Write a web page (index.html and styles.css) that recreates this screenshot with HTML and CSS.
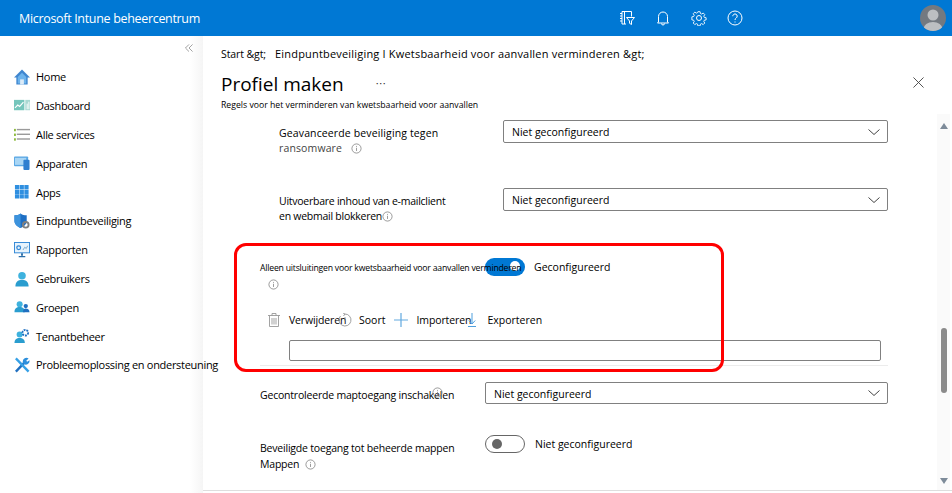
FILE: index.html
```html
<!DOCTYPE html>
<html lang="nl">
<head>
<meta charset="utf-8">
<title>Microsoft Intune beheercentrum</title>
<link rel="stylesheet" href="styles.css">
</head>
<body>
<header class="topbar">
  <div class="brand">Microsoft Intune beheercentrum</div>
  <div class="top-icons">
    <svg class="top-icon" viewBox="0 0 16 16"><path d="M3 1.500h9.500v5M3 1.500v12.500h4M1 3.500h2M1 6h2M1 8.500h2M1 11h2M5.500 1.500v12.500M7.500 7.500h8l-3 3.500v3.500l-2-1.200v-2.300z"/></svg>
    <svg class="top-icon" viewBox="0 0 16 16"><path d="M3.500 12V6.500a4.500 4.500 0 0 1 9 0V12l1 1h-11zM6.500 13.500a1.500 1.500 0 0 0 3 0"/></svg>
    <svg class="top-icon" viewBox="0 0 16 16"><circle cx="8" cy="8" r="2.500"/><path d="M6.800 1h2.400l.4 2 1.300.6 1.800-1.100 1.700 1.700-1.100 1.800.6 1.300 2 .4v2.400l-2 .4-.6 1.300 1.100 1.800-1.700 1.700-1.800-1.100-1.300.6-.4 2H6.800l-.4-2-1.300-.6-1.800 1.100-1.700-1.700 1.100-1.800-.6-1.300-2-.4V6.700l2-.4.6-1.300-1.100-1.800 1.700-1.700 1.800 1.100 1.300-.6z" transform="translate(.8 .8) scale(.9)"/></svg>
    <svg class="top-icon" viewBox="0 0 16 16"><circle cx="8" cy="8" r="7"/><path d="M5.800 6.200a2.200 2.200 0 1 1 3.400 1.800c-.8.500-1.200 1-1.200 2M8 11.500v1"/></svg>
  </div>
  <svg class="avatar" viewBox="0 0 26 26"><defs><clipPath id="av"><circle cx="13" cy="13" r="13"/></clipPath></defs><circle cx="13" cy="13" r="13" fill="#737980"/><g clip-path="url(#av)" fill="#bcbfc2"><circle cx="13" cy="10" r="5.500"/><ellipse cx="13" cy="24" rx="9.500" ry="7"/></g></svg>
</header>

<div class="shell">
  <nav class="sidebar">
    <div class="collapse">
      <svg class="collapse-icon" viewBox="0 0 9 9"><path d="M4.500 .5 .5 4.500l4 4M8.500 .5l-4 4 4 4"/></svg>
    </div>
    <a class="nav-item"><svg class="nav-icon" viewBox="0 0 17 17"><path d="M8.500 .5 0 9h2.500v7.500h12V9H17z" fill="#3f86cf"/><path d="M4 8.500 8.500 4 13 8.500v7H4z" fill="#6db3ec"/><rect x="6.500" y="11" width="4" height="5.500" fill="#dcebf8"/></svg><span>Home</span></a>
    <a class="nav-item"><svg class="nav-icon" viewBox="0 0 17 17"><rect y="2" width="11" height="11" fill="#76c6bc"/><rect x="12" y="2" width="5" height="11" fill="#a8d8d2"/><path d="M1 10.500 4 7.500l2 1.500 4-4.500" fill="none" stroke="#fff" stroke-width="1.200"/><path d="M14 12V6M15.800 12V4" stroke="#fff"/></svg><span>Dashboard</span></a>
    <a class="nav-item"><svg class="nav-icon" viewBox="0 0 17 17"><g fill="#8dbb3e"><rect y="2" width="2" height="2.500"/><rect y="7" width="2" height="2.500"/><rect y="12" width="2" height="2.500"/></g><g fill="#9a9a9a"><rect x="3" y="2" width="14" height="1.500"/><rect x="3" y="7" width="14" height="1.500"/><rect x="3" y="12" width="14" height="1.500"/></g></svg><span>Alle services</span></a>
    <a class="nav-item"><svg class="nav-icon" viewBox="0 0 17 17"><rect y="1.500" width="15" height="10.500" rx="1" fill="#5aa7e4"/><rect x="1" y="3" width="12" height="7.500" fill="#a9d6f5"/><rect x="10" y="5" width="6.500" height="11" rx="1" fill="#2f7fd0"/></svg><span>Apparaten</span></a>
    <a class="nav-item"><svg class="nav-icon" viewBox="0 0 17 17"><path fill="#2f8fe0" d="M1 1h4.500v4.500H1zM6 1h4.500v4.500H6zM11 1h4.500v4.500H11zM1 6h4.500v4.500H1zM6 6h4.500v4.500H6zM11 6h4.500v4.500H11zM1 11h4.500v4.500H1zM6 11h4.500v4.500H6zM11 11h4.500v4.500H11z"/></svg><span>Apps</span></a>
    <a class="nav-item"><svg class="nav-icon" viewBox="0 0 17 17"><path d="M7 .5C5 2 3 2.500.5 2.500v6C.500 12 3.500 14.500 7 16c3.500-1.500 6.500-4 6.500-7.500v-6C11 2.500 9 2 7 .5z" fill="#1e6fc4"/><path d="M7 .5v15.500C3.500 14.500.5 12 .5 8.500v-6C3 2.500 5 2 7 .5z" fill="#3c93dd"/><circle cx="12.500" cy="12.500" r="3" fill="none" stroke="#7f7f7f" stroke-width="2"/></svg><span>Eindpuntbeveiliging</span></a>
    <a class="nav-item"><svg class="nav-icon" viewBox="0 0 17 17"><rect x=".5" y=".5" width="16" height="11" fill="#e7f3fc" stroke="#2f86d6"/><circle cx="5" cy="6" r="2" fill="none" stroke="#2f86d6" stroke-width="1.300"/><path d="M9.500 8.500l2-3 1.500 1.500 1.500-3" fill="none" stroke="#7aa6c8"/><path d="M7.500 12h2v2.500h-2zM5 15h7v1.200H5z" fill="#2a6da8"/></svg><span>Rapporten</span></a>
    <a class="nav-item"><svg class="nav-icon" viewBox="0 0 17 17"><circle cx="8.500" cy="5" r="4" fill="#3eb2de"/><path d="M1.500 16.500c0-5 2.500-7 7-7s7 2 7 7z" fill="#2a9dcf"/></svg><span>Gebruikers</span></a>
    <a class="nav-item"><svg class="nav-icon" viewBox="0 0 17 17"><circle cx="6" cy="5.500" r="3.200" fill="#3eb2de"/><path d="M.5 14c0-4 2-5.500 5.500-5.500s5.500 1.500 5.500 5.500z" fill="#2a9dcf"/><circle cx="12.500" cy="7.500" r="2.300" fill="#1f6fc0"/><path d="M9.500 14c.2-3 1.200-4 3-4s4 1 4 4z" fill="#1f6fc0"/></svg><span>Groepen</span></a>
    <a class="nav-item"><svg class="nav-icon" viewBox="0 0 17 17"><circle cx="6" cy="7" r="3.200" fill="#3eb2de"/><path d="M.5 16c0-4 2-5.500 5.500-5.500s5.500 1.500 5.500 5.500z" fill="#2a9dcf"/><circle cx="12" cy="5" r="3" fill="none" stroke="#1f6fc0" stroke-width="2" stroke-dasharray="2 1"/></svg><span>Tenantbeheer</span></a>
    <a class="nav-item"><svg class="nav-icon" viewBox="0 0 17 17"><path d="M2 15.500 11 6" stroke="#1f6fc0" stroke-width="2.500" fill="none"/><path d="M9.500 6a4 4 0 0 1 6-4.500l-2.500 2.500 1 1 2.500-1.500a4 4 0 0 1-6 4z" fill="#2d8fdc"/><path d="M2 1.500l13.500 14" stroke="#35a0e6" stroke-width="2.500" fill="none"/></svg><span class="nowrap">Probleemoplossing en ondersteuning</span></a>
  </nav>

  <main class="main">
    <div class="crumbs">
      <span class="crumb-start">Start &amp;gt;</span>
      <span class="crumb-path">Eindpuntbeveiliging I Kwetsbaarheid voor aanvallen verminderen &amp;gt;</span>
    </div>
    <div class="title-row">
      <h1 class="title">Profiel maken</h1>
      <span class="more">···</span>
      <svg class="close" viewBox="0 0 12 12"><path d="M.5.500l11 11M11.500.500l-11 11"/></svg>
    </div>
    <p class="subtitle">Regels voor het verminderen van kwetsbaarheid voor aanvallen</p>

    <div class="panel">
      <div class="form">
        <div class="row row-a">
          <div class="label label-a label-wide">Geavanceerde beveiliging tegen<br><span class="muted">ransomware</span>
            <svg class="info info-gap" viewBox="0 0 12 12"><circle cx="6" cy="6" r="5"/><path d="M6 5.200v3.500M6 3.200v1"/></svg></div>
          <div class="select select-a">Niet geconfigureerd<svg class="chevron" viewBox="0 0 12 6"><path d="M.5.500 6 5.500 11.500.500"/></svg></div>
        </div>
        <div class="row row-b">
          <div class="label label-a label-tight">Uitvoerbare inhoud van e-mailclient<br>en webmail blokkeren<svg class="info" viewBox="0 0 12 12"><circle cx="6" cy="6" r="5"/><path d="M6 5.200v3.500M6 3.200v1"/></svg></div>
          <div class="select select-a">Niet geconfigureerd<svg class="chevron" viewBox="0 0 12 6"><path d="M.5.500 6 5.500 11.500.500"/></svg></div>
        </div>
        <div class="row row-c">
          <div class="label label-c label-top"><span class="tiny">Alleen uitsluitingen voor kwetsbaarheid voor aanvallen verminderen</span><br><svg class="info info-c" viewBox="0 0 12 12"><circle cx="6" cy="6" r="5"/><path d="M6 5.200v3.500M6 3.200v1"/></svg></div>
          <div class="toggle toggle-on"><i class="knob"></i></div>
          <span class="toggle-text">Geconfigureerd</span>
        </div>
        <div class="toolbar">
          <svg class="tool-icon trash" viewBox="0 0 12 14"><path d="M0 2.500h12M4 2.500V.5h4v2M1.500 2.500v11h9v-11M4 5v6.500M6 5v6.500M8 5v6.500"/></svg>
          <span class="tool-del">Verwijderen</span>
          <svg class="tool-icon sort" viewBox="0 0 14 14"><path d="M7 1a6 6 0 1 1-4.500 2M7 1 5 0M7 1 5.500 3M7 4v4"/></svg>
          <span class="tool-sort">Soort</span>
          <svg class="tool-icon plus" viewBox="0 0 14 14"><path d="M7 0v14M0 7h14"/></svg>
          <span class="tool-imp">Importeren</span>
          <svg class="tool-icon down" viewBox="0 0 8 14"><path d="M4 0v11M.8 7.500 4 11l3.200-3.500M0 13.500h8"/></svg>
          <span class="tool-exp">Exporteren</span>
        </div>
        <div class="text-input"></div>
        <div class="divider"></div>
        <div class="row row-d">
          <div class="label label-c label-d label-narrow">Gecontroleerde maptoegang inschakelen<svg class="info info-d" viewBox="0 0 12 12"><circle cx="6" cy="6" r="5"/><path d="M6 5.200v3.500M6 3.200v1"/></svg></div>
          <div class="select select-d">Niet geconfigureerd<svg class="chevron" viewBox="0 0 12 6"><path d="M.5.500 6 5.500 11.500.500"/></svg></div>
        </div>
        <div class="row row-e">
          <div class="label label-c label-e label-narrow">Beveiligde toegang tot beheerde mappen<br>Mappen<svg class="info info-gap" viewBox="0 0 12 12"><circle cx="6" cy="6" r="5"/><path d="M6 5.200v3.500M6 3.200v1"/></svg></div>
          <div class="toggle toggle-off"><i class="knob"></i></div>
          <span class="toggle-text toggle-text-off">Niet geconfigureerd</span>
        </div>
      </div>
      <div class="scrollbar">
        <i class="arrow-up"></i>
        <i class="thumb"></i>
        <i class="arrow-down"></i>
      </div>
    </div>
    <div class="bottom-line"></div>
    <div class="callout"></div>
  </main>
</div>
</body>
</html>
```
FILE: styles.css
```css
* { box-sizing: border-box; }
html, body { margin: 0; height: 100%; overflow: hidden; }
body { font-family: "Open Sans", "Noto Sans", sans-serif; font-size: 11px; color: #000; background: #fff; }
svg { display: block; flex: none; }

.topbar { height: 36px; background: #0078d4; display: flex; align-items: center; color: #fff; }
.brand { margin-left: 19px; font-size: 12.500px; letter-spacing: -.32px; }
.top-icons { margin-left: auto; display: flex; gap: 20px; margin-right: 209px; }
.top-icon { width: 16px; height: 16px; fill: none; stroke: #fff; stroke-width: 1; }
.avatar { width: 26px; height: 26px; position: absolute; left: 920px; top: 5px; }

.shell { display: flex; height: 457px; }
.sidebar { width: 203px; flex: none; background: linear-gradient(to right, #fff 190px, #f5f5f5 203px); padding-left: 14px; }
.collapse { height: 26.600px; padding: 8px 0 0 171px; }
.collapse-icon { width: 8px; height: 8px; fill: none; stroke: #8a8a8a; stroke-width: .9; }
.nav-item { display: flex; align-items: center; height: 28.800px; gap: 6px; letter-spacing: -.3px; }
.nav-icon { width: 16px; height: 16px; }
.nowrap { white-space: nowrap; }

.main { flex: 1; position: relative; min-width: 0; display: flex; flex-direction: column; }
.crumbs { display: flex; height: 36px; padding: 10px 0 0 18px; line-height: 16px; }
.crumb-start { width: 54px; font-size: 10.500px; letter-spacing: -.1px; }
.crumb-path { white-space: nowrap; font-size: 11px; letter-spacing: .19px; }
.title-row { display: flex; align-items: center; height: 24px; padding: 0 28px 0 18px; }
.title { margin: 0; font-size: 19px; font-weight: 400; line-height: 24px; }
.more { margin-left: 32px; font-size: 11px; letter-spacing: .6px; color: #333; position: relative; top: -2px; }
.close { width: 11px; height: 11px; margin: 0 0 3px auto; fill: none; stroke: #444; stroke-width: 1; }
.subtitle { margin: 0; padding: 3px 0 0 18px; font-size: 8.700px; line-height: 12px; height: 18px; white-space: nowrap; }

.panel { flex: 1; display: flex; min-height: 0; }
.form { flex: 1; min-width: 0; padding-top: 6px; }
.row { display: flex; align-items: flex-start; }
.row-a { padding-left: 76px; height: 68px; }
.row-b { padding-left: 76px; height: 70px; }
.row-c { padding-left: 57px; height: 51px; }
.row-d { padding-left: 57px; height: 53px; margin-top: 16px; }
.row-e { padding-left: 57px; }
.label { line-height: 15px; white-space: nowrap; font-size: 10.500px; }
.label-a { width: 224px; padding-top: 6px; }
.label-c { width: 225px; padding-top: 4px; position: relative; z-index: 1; }
.label-top { padding-top: 2px; }
.label-d { padding-top: 6px; }
.label-e { padding-top: 5px; line-height: 16px; }
.label-wide { letter-spacing: .13px; }
.label-tight { letter-spacing: -.25px; }
.label-narrow { letter-spacing: -.2px; }
.muted { color: #444; }
.tiny { font-size: 8.700px; letter-spacing: -.22px; }
.info { display: inline-block; width: 11px; height: 11px; vertical-align: -2px; fill: none; stroke: #777; stroke-width: .8; }
.info-gap { margin-left: 6px; }
.info-c { margin: 3px 0 0 8px; }
.info-d { position: absolute; left: 172px; top: 5px; }

.select { height: 23px; border: 1px solid #808080; border-radius: 2px; display: flex; align-items: center; justify-content: space-between; padding: 1px 7px 0 8px; font-size: 10.500px; background: #fff; }
.select-a { width: 385px; }
.select-d { width: 403px; height: 22px; }
.chevron { width: 12px; height: 6px; margin-top: -1px; fill: none; stroke: #444; stroke-width: 1; }

.toggle { width: 40px; height: 18px; border-radius: 9px; position: relative; flex: none; }
.toggle-on { background: #0078d4; }
.toggle-off { background: #fff; border: 1px solid #666; }
.knob { position: absolute; width: 10px; height: 10px; border-radius: 50%; top: 3px; }
.toggle-on .knob { right: 5px; background: #fff; }
.toggle-off .knob { left: 6px; top: 3px; background: #666; }
.toggle-text { margin-left: 9px; padding-top: 1px; line-height: 16px; font-size: 10.500px; }
.toggle-text-off { margin-left: 10px; }

.toolbar { display: flex; align-items: center; height: 22px; margin-left: 71px; font-size: 10.500px; }
.tool-icon { fill: none; }
.trash { width: 12px; height: 14px; stroke: #999; stroke-width: .9; margin-left: -6px; }
.tool-del { margin-left: 9px; width: 49px; white-space: nowrap; letter-spacing: -.15px; }
.sort { width: 14px; height: 14px; stroke: #888; stroke-width: .8; }
.tool-sort { margin-left: 7px; }
.plus { width: 14px; height: 14px; stroke: #62a9e0; stroke-width: 1.200; margin-left: 9px; }
.tool-imp { margin-left: 8px; width: 52px; white-space: nowrap; letter-spacing: -.1px; }
.down { width: 8px; height: 14px; stroke: #4f9fdd; stroke-width: 1; }
.tool-exp { margin-left: 11px; }
.text-input { width: 592px; height: 21px; margin: 9px 0 0 86px; border: 1px solid #808080; border-radius: 2px; background: #fff; }
.divider { height: 1px; margin: 4px 0 0 57px; width: 628px; background: #ececec; }

.scrollbar { width: 13px; margin-right: 2px; background: #fafafa; display: flex; flex-direction: column; align-items: center; }
.arrow-up, .arrow-down { width: 0; height: 0; border-left: 4px solid transparent; border-right: 4px solid transparent; }
.arrow-up { border-bottom: 6px solid #7d8b99; margin-top: 9px; }
.thumb { width: 6px; height: 65px; background: #8a8a8a; border-radius: 3px; margin-top: 199px; }
.arrow-down { border-top: 6px solid #7d8b99; margin-top: 85px; }
.bottom-line { height: 1px; background: #dedede; margin-bottom: 2px; }

.callout { position: absolute; left: 31px; top: 207px; width: 490px; height: 129px; border: 3px solid #f00; border-radius: 12px; pointer-events: none; }
```
